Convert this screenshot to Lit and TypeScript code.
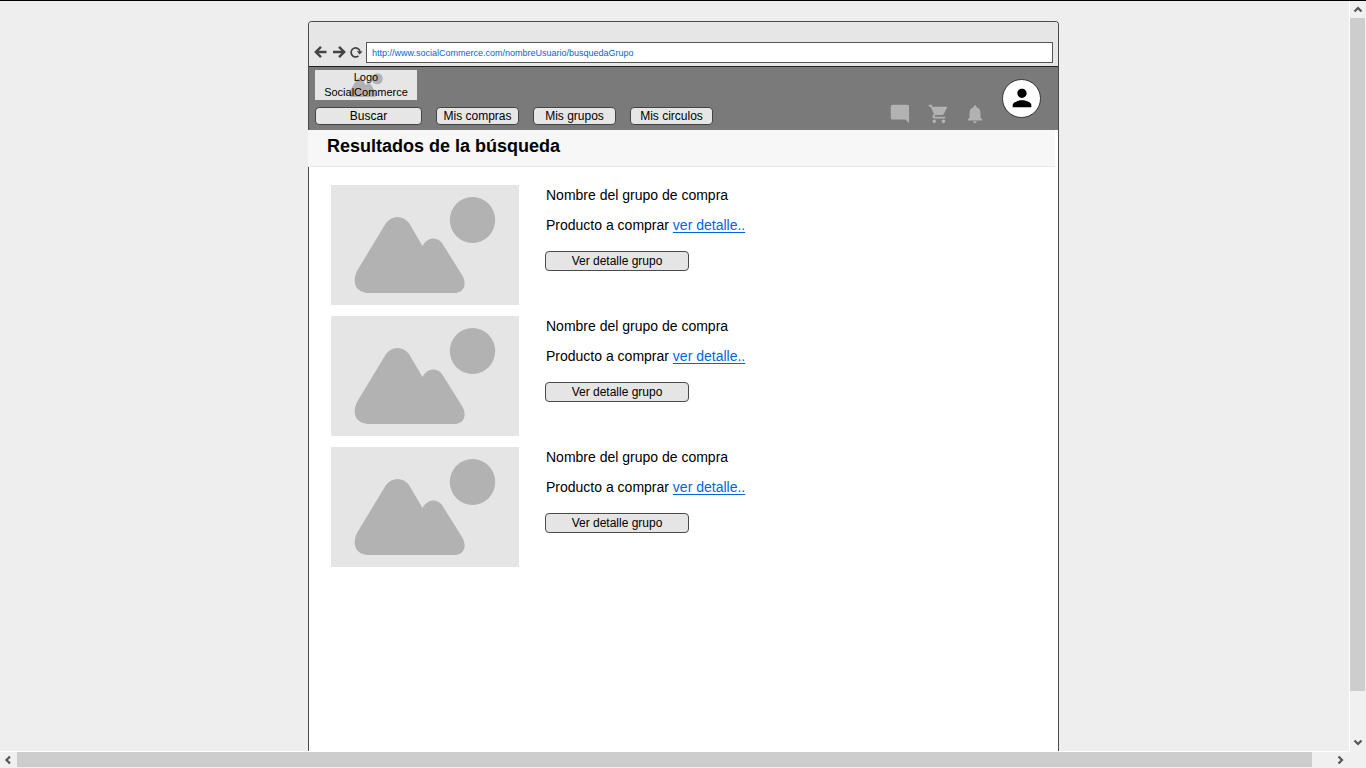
import { LitElement, html, css, svg } from "lit";
import { customElement } from "lit/decorators.js";

const picture = html`<svg class="picture" viewBox="0 0 188 120" aria-hidden="true">
  <rect width="188" height="120" fill="#e5e5e5" />
  <ellipse cx="141.500" cy="35" rx="22.700" ry="23" fill="#b2b2b2" />
  <path
    fill="#b2b2b2"
    d="M26 86 L55 38 C61 30 72 30 78 38 L91.500 61 C96 52 106 51 111 58 L131 90 C136 98 134 108 123 108 H39 C26 108 20 99 26 86 Z"
  />
</svg>`;

const icon = (size: number, shape: unknown, viewBox = "0 0 24 24") =>
  html`<svg class="glyph" width=${size} height=${size} viewBox=${viewBox} fill="currentColor" aria-hidden="true">${shape}</svg>`;

const chevron = (d: string) =>
  html`<svg width="17" height="17" viewBox="0 0 17 17" aria-hidden="true"><path d=${d} fill="none" stroke="#555" stroke-width="2.200" /></svg>`;

@customElement("result-card")
export class ResultCard extends LitElement {
  static styles = css`
    :host {
      display: flex;
      gap: 27px;
    }
    .picture {
      display: block;
      width: 188px;
      height: 120px;
      flex: none;
    }
    .name,
    .product {
      margin: 0 0 10px;
      font-size: 14px;
      line-height: 20px;
    }
    .product {
      margin-bottom: 16px;
    }
    .link {
      color: #0066dd;
      text-underline-offset: 2px;
    }
    .detail {
      display: block;
      box-sizing: border-box;
      width: 144px;
      height: 20px;
      margin: 0 0 0 -1px;
      padding: 1px 0 0;
      border: 1px solid #4a4a4a;
      border-radius: 4px;
      background: #e5e5e5;
      color: #000;
      font: 12px/17px "Liberation Sans", Arial, sans-serif;
    }
  `;
  render() {
    return html`${picture}
      <div>
        <p class="name">Nombre del grupo de compra</p>
        <p class="product">Producto a comprar <a class="link" href="#">ver detalle..</a></p>
        <button class="detail">Ver detalle grupo</button>
      </div>`;
  }
}

@customElement("app-root")
export class AppRoot extends LitElement {
  static styles = css`
    :host {
      display: grid;
      grid-template: minmax(0, 1fr) 17px / minmax(0, 1fr) 17px;
      box-sizing: border-box;
      height: 100vh;
      border-top: 1px solid #000;
      background: #f0f0f0;
      color: #000;
      font-family: "Liberation Sans", Arial, sans-serif;
    }
    .canvas {
      display: flex;
      justify-content: center;
      overflow: hidden;
      padding: 20px 0 0 18px;
      background: #eee;
    }
    .window {
      display: flex;
      flex-direction: column;
      box-sizing: border-box;
      width: 751px;
      border: 1px solid #4a4a4a;
      border-bottom: 0;
      border-radius: 4px 4px 0 0;
      background: #fff;
    }
    .chrome {
      display: flex;
      align-items: center;
      gap: 2px;
      padding: 20px 5px 3px 4px;
      border-bottom: 1px solid #222;
      border-radius: 3px 3px 0 0;
      background: #e6e6e6;
    }
    .tool {
      display: block;
      padding: 0 0 2px;
      border: 0;
      background: none;
      color: #444;
      line-height: 0;
    }
    .address {
      flex: 1;
      min-width: 0;
      box-sizing: border-box;
      height: 21px;
      margin-left: -1px;
      padding: 0 5px;
      border: 1px solid #555;
      border-radius: 0;
      background: #fff;
      color: #0066dd;
      font: 9px/18px "Liberation Sans", Arial, sans-serif;
    }
    .header {
      display: flex;
      justify-content: space-between;
      padding: 3px 17px 5px 6px;
      background: #7a7a7a;
    }
    .logo {
      display: grid;
      width: 102px;
      height: 30px;
      background: #e6e6e6;
      font-size: 11px;
      line-height: 15px;
      text-align: center;
    }
    .logo-art,
    .logo-text {
      grid-area: 1 / 1;
    }
    .logo-art {
      justify-self: center;
    }
    .nav {
      display: flex;
      gap: 14px;
      margin-top: 7px;
    }
    .nav-button {
      box-sizing: border-box;
      width: 83px;
      height: 18px;
      padding: 0;
      border: 1px solid #444;
      border-radius: 4px;
      background: #e6e6e6;
      color: #000;
      font: 12px/16px "Liberation Sans", Arial, sans-serif;
    }
    .wide {
      width: 107px;
    }
    .actions {
      display: flex;
      align-items: flex-end;
      gap: 16px;
      color: #b2b2b2;
    }
    .glyph {
      display: block;
    }
    .avatar {
      display: grid;
      place-items: center;
      box-sizing: border-box;
      width: 39px;
      height: 39px;
      margin-bottom: 7px;
      padding: 0 0 2px;
      border: 1px solid #333;
      border-radius: 50%;
      background: #fff;
      color: #000;
    }
    .title {
      margin: 0 3px 0 -1px;
      padding: 5px 19px 9px;
      border-bottom: 1px solid #e8e8e8;
      background: #f7f7f7;
      font-size: 18px;
      line-height: 22px;
    }
    .results {
      display: grid;
      gap: 11px;
      padding: 18px 22px;
    }
    .bar {
      display: flex;
      justify-content: space-between;
      border: 0 solid #fff;
    }
    .vertical {
      flex-direction: column;
      border-left-width: 1px;
    }
    .horizontal {
      border-top-width: 1px;
    }
    .thumb {
      flex: 1;
      background: #cdcdcd;
    }
    .vertical .thumb {
      margin: 0 1px 43px 0;
    }
    .horizontal .thumb {
      margin: 0 20px 1px 0;
    }
  `;

  render() {
    return html`
      <main class="canvas">
        <div class="window">
          <div class="chrome">
            <button class="tool" aria-label="Atrás">
              <svg width="16" height="16" viewBox="0 0 16 16" fill="none" stroke="currentColor" stroke-width="2.400">
                <path d="M13.500 8H3M8 2.800 2.800 8 8 13.200" />
              </svg>
            </button>
            <button class="tool" aria-label="Adelante">
              <svg width="16" height="16" viewBox="0 0 16 16" fill="none" stroke="currentColor" stroke-width="2.400">
                <path d="M2 8H13M8 2.800 13.200 8 8 13.200" />
              </svg>
            </button>
            <button class="tool" aria-label="Recargar">
              <svg width="16" height="16" viewBox="0 0 16 16" fill="none" stroke="currentColor" stroke-width="1.700">
                <path d="M9.500 11.900A4.500 4.500 0 1 1 11 7.500" />
                <path d="M7.800 7.300H13.600L10.700 10.600Z" fill="currentColor" stroke="none" />
              </svg>
            </button>
            <input class="address" aria-label="Dirección" value="http://www.socialCommerce.com/nombreUsuario/busquedaGrupo" />
          </div>
          <header class="header">
            <div>
              <div class="logo">
                <svg class="logo-art" width="47" height="30" viewBox="0 0 188 120" aria-hidden="true">
                  <circle cx="137" cy="35" r="22" fill="#b2b2b2" />
                  <path
                    fill="#b2b2b2"
                    d="M26 86 L55 38 C61 30 72 30 78 38 L91.500 61 C96 52 106 51 111 58 L131 90 C136 98 134 108 123 108 H39 C26 108 20 99 26 86 Z"
                  />
                </svg>
                <span class="logo-text">Logo<br />SocialCommerce</span>
              </div>
              <nav class="nav">
                <button class="nav-button wide">Buscar</button>
                <button class="nav-button">Mis compras</button>
                <button class="nav-button">Mis grupos</button>
                <button class="nav-button">Mis circulos</button>
              </nav>
            </div>
            <div class="actions">
              ${icon(22, svg`<path d="M22 4c0-1.100-.900-2-2-2H4c-1.100 0-2 .9-2 2v12c0 1.100.900 2 2 2h14l4 4V4z" />`, "-1 0 24 24")}
              ${icon(22, svg`<path d="M7 18c-1.100 0-2 .9-2 2s.9 2 2 2 2-.9 2-2-.9-2-2-2zM1 2v2h2l3.600 7.600-1.350 2.450c-.16.280-.25.600-.25.950 0 1.100.9 2 2 2h12v-2H7.420c-.14 0-.25-.11-.25-.25l.03-.12.900-1.630h7.450c.75 0 1.410-.41 1.750-1.030L20.900 5.500A1 1 0 0 0 20 4H5.210l-.94-2H1zm16 16c-1.100 0-2 .9-2 2s.9 2 2 2 2-.9 2-2-.9-2-2-2z" />`, "-2 0 24 24")}
              ${icon(22, svg`<path d="M12 22c1.100 0 2-.9 2-2h-4c0 1.100.890 2 2 2zm6-6v-5c0-3.070-1.640-5.640-4.500-6.320V4c0-.83-.67-1.500-1.500-1.500s-1.500.67-1.500 1.500v.68C7.630 5.360 6 7.920 6 11v5l-2 2v1h16v-1l-2-2z" />`)}
              <button class="avatar" aria-label="Perfil">
                ${icon(28, svg`<path d="M12 12c2.210 0 4-1.790 4-4s-1.790-4-4-4-4 1.790-4 4 1.790 4 4 4zm0 2c-2.670 0-8 1.340-8 4v2h16v-2c0-2.660-5.330-4-8-4z" />`)}
              </button>
            </div>
          </header>
          <h1 class="title">Resultados de la búsqueda</h1>
          <section class="results">
            <result-card></result-card>
            <result-card></result-card>
            <result-card></result-card>
          </section>
        </div>
      </main>
      <div class="bar vertical">
        ${chevron("M4.500 10.500 8 7l3.500 3.500")}
        <div class="thumb"></div>
        ${chevron("M4.500 6.500 8 10l3.500-3.500")}
      </div>
      <div class="bar horizontal">
        ${chevron("M10 4.500 6.500 8l3.500 3.500")}
        <div class="thumb"></div>
        ${chevron("M6.500 4.500 10 8l-3.500 3.500")}
      </div>
    `;
  }
}
